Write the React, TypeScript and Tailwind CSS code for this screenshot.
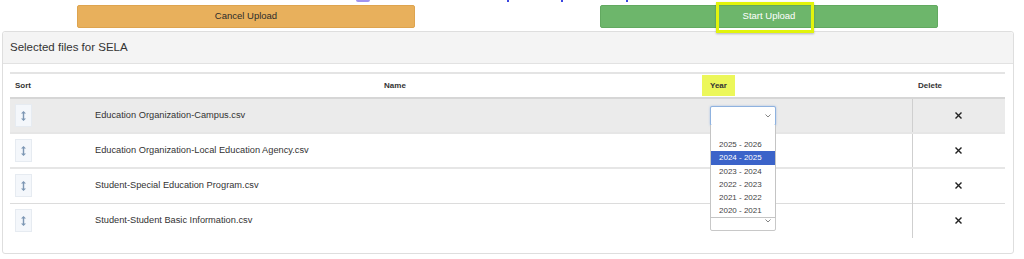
import React from 'react';

type FileRow = { name: string; active?: boolean; border: string };

const files: FileRow[] = [
  { name: 'Education Organization-Campus.csv', active: true, border: 'border-t-0' },
  { name: 'Education Organization-Local Education Agency.csv', border: 'border-t-2 border-[#e6e6e6]' },
  { name: 'Student-Special Education Program.csv', border: 'border-t-2 border-[#e6e6e6]' },
  { name: 'Student-Student Basic Information.csv', border: 'border-t border-[#dcdcdc]' },
];

const years = ['', '2025 - 2026', '2024 - 2025', '2023 - 2024', '2022 - 2023', '2021 - 2022', '2020 - 2021'];

const SortHandle = () => (
  <div className="w-[17px] h-[23px] bg-[#f4f7fb] border border-[#e6ebf1] flex items-center justify-center">
    <svg width="5" height="10" viewBox="0 0 5 10" fill="#7d97b4">
      <path d="M2.5 0 L5 2.6 H3.2 V7.4 H5 L2.5 10 L0 7.4 H1.8 V2.6 H0 Z" />
    </svg>
  </div>
);

const Chevron = () => (
  <svg width="6" height="4" viewBox="0 0 6 4" fill="none" stroke="#777" strokeWidth="0.9">
    <path d="M0.5 0.5 L3 3 L5.5 0.5" />
  </svg>
);

const YearSelect = ({ focused }: { focused?: boolean }) => (
  <div
    className={
      focused
        ? 'w-[66px] h-[20px] bg-white border border-[#8fb2df] rounded-[2px] shadow-[0_0_2px_rgba(80,140,220,0.5)] flex items-center justify-end pr-[4px]'
        : 'w-[66px] h-[20px] bg-white border border-[#c8c8c8] rounded-[2px] flex items-center justify-end pr-[4px]'
    }
  >
    <Chevron />
  </div>
);

const CloseIcon = () => (
  <svg width="7" height="7" viewBox="0 0 7 7" stroke="#222" strokeWidth="1.4" strokeLinecap="square">
    <path d="M1 1 L6 6 M6 1 L1 6" />
  </svg>
);

export default function App() {
  return (
    <div className="relative w-[1024px] h-[259px] bg-white overflow-hidden text-[#333]" style={{ fontFamily: '"Liberation Sans", Arial, sans-serif' }}>
      {/* bits of the content cut off above */}
      <div className="absolute left-[356px] top-0 w-[14px] h-[2px] bg-[#a093f0] rounded-b-[2px]" />
      <div className="absolute left-[507px] top-0 w-[2px] h-[2px] bg-[#3b46e0]" />
      <div className="absolute left-[561px] top-0 w-[2px] h-[2px] bg-[#3b46e0]" />
      <div className="absolute left-[626px] top-0 w-[2px] h-[2px] bg-[#3b46e0]" />

      <div className="flex pt-[5px] pl-[77px] gap-[185px]">
        <button className="w-[338px] h-[23px] bg-[#e8b05c] border border-[#deA44f] rounded-[2px] text-[9.5px] text-[#2b2b2b] flex items-center justify-center">
          Cancel Upload
        </button>
        <div className="relative">
          <button className="w-[338px] h-[23px] bg-[#6db66b] border border-[#62a960] rounded-[2px] text-[9.5px] text-white flex items-center justify-center">
            Start Upload
          </button>
          <div className="absolute left-[116px] top-[-3px] w-[98px] h-[31px] border-[3px] border-[#e2f40c] shadow-[0_1px_2px_rgba(0,0,0,0.25)]" />
        </div>
      </div>

      <div className="ml-[2px] mt-[3px] w-[1012px] h-[223px] border border-[#dedede] rounded-[3px] bg-white">
        <div className="h-[32px] bg-[#f4f4f4] border-b border-[#e2e2e2] flex items-center pl-[7px] text-[11.5px] text-[#333] rounded-t-[3px]">
          Selected files for SELA
        </div>
        <div className="pt-[8px] pl-[7px]">
          <div className="relative w-[995px]">
            <table className="w-[995px] border-collapse table-fixed">
              <colgroup>
                <col className="w-[78px]" />
                <col className="w-[614px]" />
                <col className="w-[210px]" />
                <col className="w-[93px]" />
              </colgroup>
              <thead>
                <tr className="h-[25px] border-t-2 border-b-2 border-t-[#e4e4e4] border-b-[#d6d6d6]">
                  <th className="text-left pl-[5px] text-[8px] font-bold">Sort</th>
                  <th className="text-center text-[8px] font-bold">Name</th>
                  <th className="text-left text-[8px] font-bold p-0">
                    <div className="inline-flex items-center h-[21px] px-[8px] bg-[#ecf75a]">Year</div>
                  </th>
                  <th className="text-left pl-[6px] text-[8px] font-bold">Delete</th>
                </tr>
              </thead>
              <tbody>
                {files.map((f) => (
                  <tr key={f.name} className={`h-[35px] ${f.border} ${f.active ? 'bg-[#ebebeb]' : 'bg-white'}`}>
                    <td className="pl-[5px] align-middle">
                      <SortHandle />
                    </td>
                    <td className="pl-[7px] text-[9.25px] text-[#333] align-middle">{f.name}</td>
                    <td className="pl-[8px] align-middle">
                      <YearSelect focused={f.active} />
                    </td>
                    <td className="border-l border-[#cfcfcf] align-middle">
                      <div className="flex justify-center">
                        <CloseIcon />
                      </div>
                    </td>
                  </tr>
                ))}
              </tbody>
            </table>

            {/* open year dropdown */}
            <div className="absolute left-[700px] top-[53px] w-[66px] bg-white border-x border-b border-[#c4c4c4]">
              {years.map((y) => (
                <div
                  key={y || 'blank'}
                  className={
                    y === '2024 - 2025'
                      ? 'h-[13.2px] pl-[8px] text-[8px] leading-[13.2px] bg-[#3b63c9] text-white'
                      : 'h-[13.2px] pl-[8px] text-[8px] leading-[13.2px] text-[#444]'
                  }
                >
                  {y}
                </div>
              ))}
            </div>
          </div>
        </div>
      </div>
    </div>
  );
}
